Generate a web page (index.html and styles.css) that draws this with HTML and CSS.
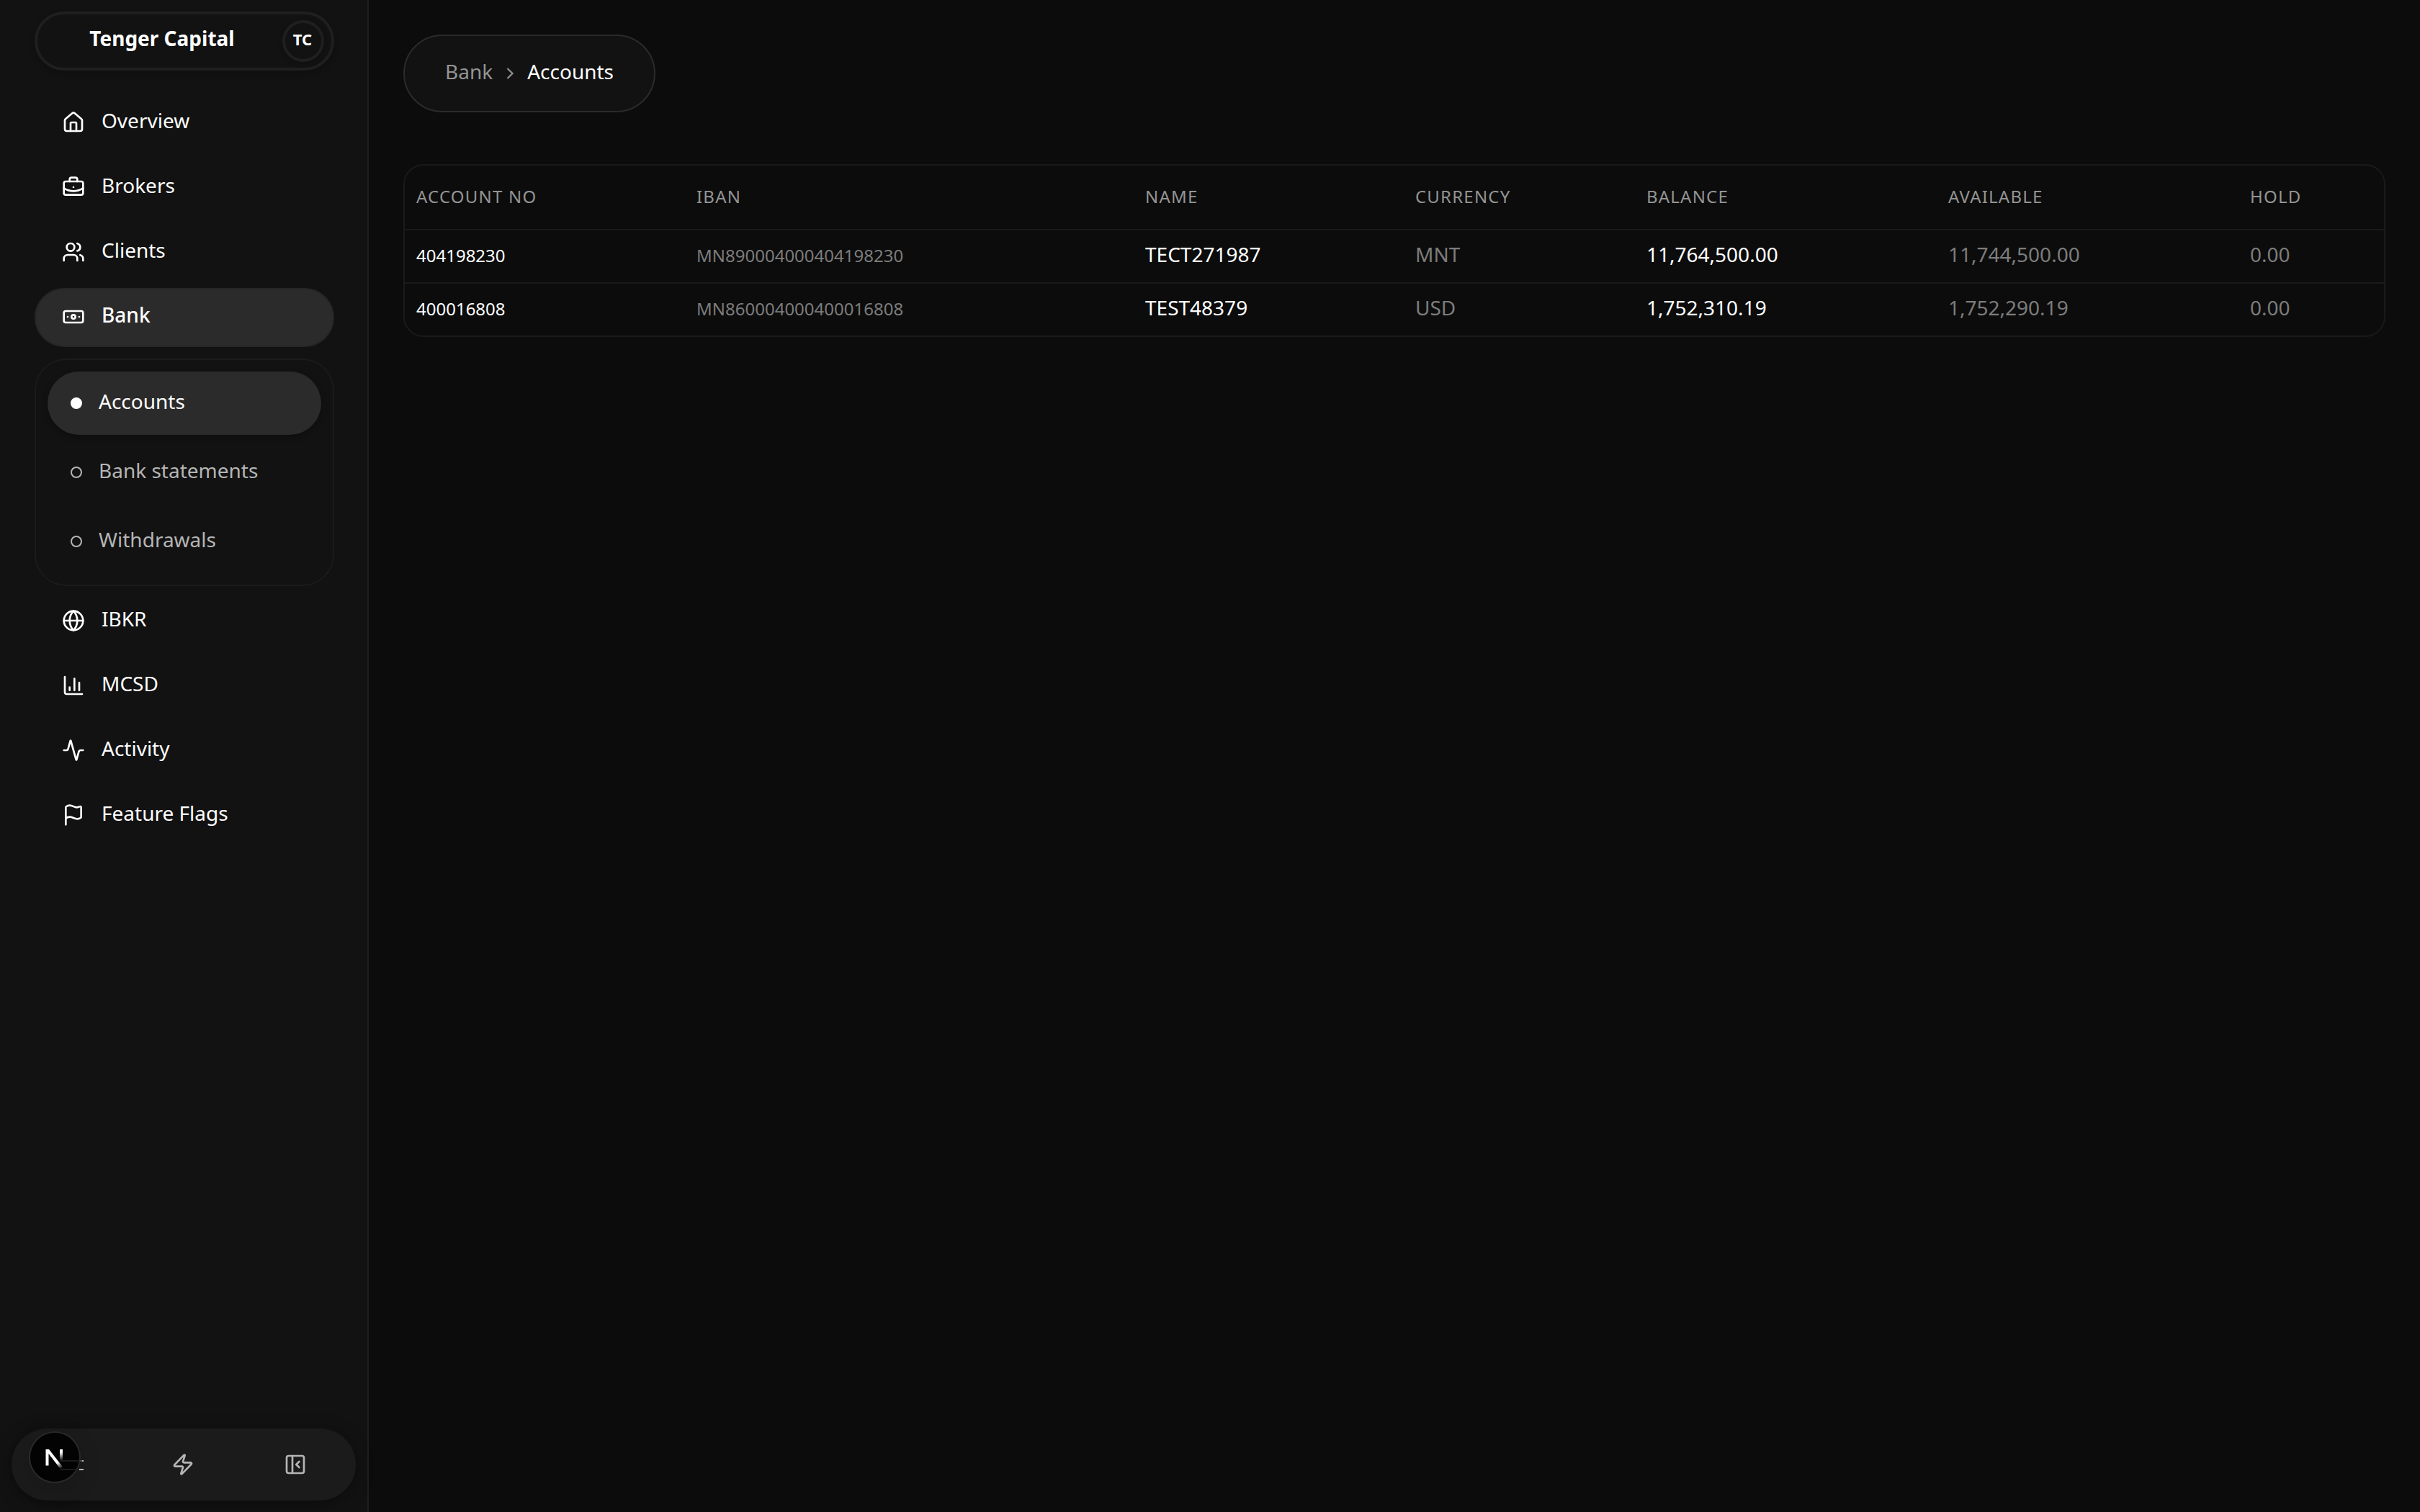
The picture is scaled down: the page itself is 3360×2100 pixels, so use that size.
FILE: index.html
```html
<!DOCTYPE html>
<html lang="en">
<head>
    <meta charset="UTF-8">
    <meta name="viewport" content="width=device-width, initial-scale=1.0">
    <title>Accounts - Tenger Capital</title>
    <link rel="stylesheet" href="styles.css">
</head>
<body>
    <!-- Sidebar -->
    <aside class="sidebar">
        <div class="brand">
            <span class="brand-name">Tenger Capital</span>
            <span class="avatar"><span>TC</span></span>
        </div>

        <nav class="nav">
            <a class="nav-item">
                <svg class="icon" viewBox="0 0 24 24"><path d="M15 21v-8a1 1 0 0 0-1-1h-4a1 1 0 0 0-1 1v8"/><path d="M3 10a2 2 0 0 1 .709-1.528l7-5.999a2 2 0 0 1 2.582 0l7 5.999A2 2 0 0 1 21 10v9a2 2 0 0 1-2 2H5a2 2 0 0 1-2-2z"/></svg>
                <span class="label">Overview</span>
            </a>
            <a class="nav-item">
                <svg class="icon" viewBox="0 0 24 24"><path d="M12 12h.01"/><path d="M16 6V4a2 2 0 0 0-2-2h-4a2 2 0 0 0-2 2v2"/><path d="M22 13a18.15 18.15 0 0 1-20 0"/><rect width="20" height="14" x="2" y="6" rx="2"/></svg>
                <span class="label">Brokers</span>
            </a>
            <a class="nav-item">
                <svg class="icon" viewBox="0 0 24 24"><path d="M16 21v-2a4 4 0 0 0-4-4H6a4 4 0 0 0-4 4v2"/><path d="M16 3.128a4 4 0 0 1 0 7.744"/><path d="M22 21v-2a4 4 0 0 0-3-3.87"/><circle cx="9" cy="7" r="4"/></svg>
                <span class="label">Clients</span>
            </a>
            <a class="nav-item active">
                <svg class="icon" viewBox="0 0 24 24"><rect width="20" height="12" x="2" y="6" rx="2"/><circle cx="12" cy="12" r="2"/><path d="M6 12h.01M18 12h.01"/></svg>
                <span class="label">Bank</span>
            </a>

            <div class="submenu">
                <a class="sub-item active"><span class="dot"></span><span class="label">Accounts</span></a>
                <a class="sub-item"><span class="dot"></span><span class="label">Bank statements</span></a>
                <a class="sub-item"><span class="dot"></span><span class="label">Withdrawals</span></a>
            </div>

            <a class="nav-item">
                <svg class="icon" viewBox="0 0 24 24"><circle cx="12" cy="12" r="10"/><path d="M12 2a14.5 14.5 0 0 0 0 20 14.5 14.5 0 0 0 0-20"/><path d="M2 12h20"/></svg>
                <span class="label">IBKR</span>
            </a>
            <a class="nav-item">
                <svg class="icon" viewBox="0 0 24 24"><path d="M3 3v16a2 2 0 0 0 2 2h16"/><path d="M18 17V9"/><path d="M13 17V5"/><path d="M8 17v-3"/></svg>
                <span class="label">MCSD</span>
            </a>
            <a class="nav-item">
                <svg class="icon" viewBox="0 0 24 24"><path d="M22 12h-2.48a2 2 0 0 0-1.93 1.46l-2.35 8.36a.25.25 0 0 1-.48 0L9.24 2.18a.25.25 0 0 0-.48 0l-2.35 8.36A2 2 0 0 1 4.49 12H2"/></svg>
                <span class="label">Activity</span>
            </a>
            <a class="nav-item">
                <svg class="icon" viewBox="0 0 24 24"><path d="M4 22V4a1 1 0 0 1 .4-.8A6 6 0 0 1 8 2c3 0 5 2 7.333 2q2 0 3.067-.8A1 1 0 0 1 20 4v10a1 1 0 0 1-.4.8A6 6 0 0 1 16 16c-3 0-5-2-8-2a6 6 0 0 0-4 1.528"/></svg>
                <span class="label">Feature Flags</span>
            </a>
        </nav>

        <!-- Bottom toolbar -->
        <div class="toolbar">
            <button class="tool"></button>
            <button class="tool">
                <svg class="icon" viewBox="0 0 24 24"><path d="M4 14a1 1 0 0 1-.78-1.63l9.9-10.2a.5.5 0 0 1 .86.46l-1.92 6.02A1 1 0 0 0 13 10h7a1 1 0 0 1 .78 1.63l-9.9 10.2a.5.5 0 0 1-.86-.46l1.92-6.02A1 1 0 0 0 11 14z"/></svg>
            </button>
            <button class="tool">
                <svg class="icon" viewBox="0 0 24 24"><rect width="18" height="18" x="3" y="3" rx="2"/><path d="M9 3v18"/><path d="m16 15-3-3 3-3"/></svg>
            </button>
        </div>
    </aside>

    <!-- Main content -->
    <main class="main-content">
        <div class="breadcrumb">
            <span class="crumb">Bank</span>
            <svg class="chevron" viewBox="0 0 24 24"><path d="m9 18 6-6-6-6"/></svg>
            <span class="crumb current">Accounts</span>
        </div>

        <div class="table-card">
            <table>
                <colgroup>
                    <col class="col-account"><col class="col-iban"><col class="col-name"><col class="col-currency">
                    <col class="col-balance"><col class="col-available"><col>
                </colgroup>
                <thead>
                    <tr>
                        <th>Account No</th>
                        <th>IBAN</th>
                        <th>Name</th>
                        <th>Currency</th>
                        <th>Balance</th>
                        <th>Available</th>
                        <th>Hold</th>
                    </tr>
                </thead>
                <tbody>
                    <tr>
                        <td class="small">404198230</td>
                        <td class="small muted">MN890004000404198230</td>
                        <td>TECT271987</td>
                        <td class="muted">MNT</td>
                        <td>11,764,500.00</td>
                        <td class="muted">11,744,500.00</td>
                        <td class="muted">0.00</td>
                    </tr>
                    <tr>
                        <td class="small">400016808</td>
                        <td class="small muted">MN860004000400016808</td>
                        <td>TEST48379</td>
                        <td class="muted">USD</td>
                        <td>1,752,310.19</td>
                        <td class="muted">1,752,290.19</td>
                        <td class="muted">0.00</td>
                    </tr>
                </tbody>
            </table>
        </div>
    </main>

    <!-- Dev tools badge -->
    <div class="dev-badge">
        <svg viewBox="0 0 80 72">
            <defs>
                <linearGradient id="fadeDiagonal" gradientUnits="userSpaceOnUse" x1="36" y1="38" x2="46" y2="51">
                    <stop offset="0" stop-color="#fff"/>
                    <stop offset="0.4" stop-color="#fff"/>
                    <stop offset="1" stop-color="#fff" stop-opacity="0"/>
                </linearGradient>
                <linearGradient id="fadeStem" gradientUnits="userSpaceOnUse" x1="0" y1="24" x2="0" y2="41">
                    <stop offset="0" stop-color="#fff"/>
                    <stop offset="0.3" stop-color="#fff"/>
                    <stop offset="1" stop-color="#fff" stop-opacity="0"/>
                </linearGradient>
            </defs>
            <path d="M44 41H70M44 53H68" stroke="#1b1b1b" stroke-width="2"/>
            <path d="M72 41h1M74 41h2M70 53h6" stroke="#b5b5b5" stroke-width="2"/>
            <path d="M23.5 25h4.5L48 50.5 44.5 53 27.5 31V47.5h-4z" fill="url(#fadeDiagonal)"/>
            <path d="M43 25h4v16h-4z" fill="url(#fadeStem)"/>
        </svg>
    </div>
</body>
</html>
```
FILE: styles.css
```css
* {
    margin: 0;
    padding: 0;
    box-sizing: border-box;
}

body {
    display: grid;
    grid-template-columns: 512px 1fr;
    min-height: 100vh;
    background-color: #0c0c0c;
    color: #fff;
    font-family: 'Noto Sans', sans-serif;
    font-size: 28px;
    line-height: 40px;
}

/* Sidebar */
.sidebar {
    display: flex;
    flex-direction: column;
    height: 100vh;
    padding: 16px;
    background-color: #121212;
    border-right: 2px solid #1f1f1f;
}

.brand {
    display: flex;
    align-items: center;
    height: 82px;
    margin: 0 30px 32px 32px;
    padding: 0 10px;
    border: 4px solid #1f1f1f;
    border-radius: 41px;
    box-shadow: 0 4px 8px rgba(0, 0, 0, 0.2);
}

.brand-name {
    flex: 1;
    padding: 0 4px 8px 0;
    text-align: center;
    font-weight: 700;
}

.avatar {
    display: flex;
    align-items: center;
    justify-content: center;
    width: 58px;
    height: 58px;
    border: 4px solid #1f1f1f;
    border-radius: 50%;
    box-shadow: 0 2px 6px rgba(0, 0, 0, 0.2);
    font-size: 22px;
    font-weight: 700;
}

.avatar span {
    padding: 0 2px 6px 0;
}

.nav {
    display: flex;
    flex-direction: column;
    gap: 8px;
    flex: 1;
    margin: 0 30px 0 32px;
}

.nav-item {
    display: flex;
    align-items: center;
    gap: 23px;
    height: 82px;
    padding: 0 36px;
    border: 2px solid transparent;
    border-radius: 41px;
}

.nav-item.active {
    background-color: #2b2b2b;
    border-color: #262626;
    font-weight: 500;
}

.icon {
    width: 32px;
    height: 32px;
    fill: none;
    stroke: currentColor;
    stroke-width: 2;
    stroke-linecap: round;
    stroke-linejoin: round;
}

.nav-item .icon {
    margin-bottom: 2px;
}

.label {
    padding-bottom: 8px;
    white-space: nowrap;
}

.submenu {
    display: flex;
    flex-direction: column;
    gap: 8px;
    margin-top: 8px;
    padding: 16px;
    border: 2px solid #1b1b1b;
    border-radius: 44px;
}

.sub-item {
    display: flex;
    align-items: center;
    gap: 23px;
    height: 88px;
    padding: 0 32px;
    border-radius: 44px;
    color: #b5b5b5;
}

.sub-item.active {
    background-color: #2b2b2b;
    box-shadow: 0 4px 8px rgba(0, 0, 0, 0.25);
    color: #fff;
}

.sub-item .label {
    padding-bottom: 6px;
}

.dot {
    width: 16px;
    height: 16px;
    border: 2px solid currentColor;
    border-radius: 50%;
}

.active .dot {
    background-color: currentColor;
}

.toolbar {
    display: flex;
    height: 100px;
    padding: 0 6px 0 4px;
    background-color: #1b1b1b;
    border-radius: 50px;
    box-shadow: 0 4px 24px rgba(0, 0, 0, 0.35);
}

.tool {
    display: flex;
    flex: 1;
    align-items: center;
    justify-content: center;
    background: none;
    border: none;
    color: #b5b5b5;
}

/* Main content */
.main-content {
    padding: 48px;
}

.breadcrumb {
    display: flex;
    align-items: center;
    gap: 10px;
    width: 350px;
    height: 108px;
    padding: 0 56px;
    background-color: #121212;
    border: 2px solid #2b2b2b;
    border-radius: 54px;
}

.crumb {
    padding-bottom: 6px;
    color: #949494;
}

.crumb.current {
    color: #fff;
}

.chevron {
    flex-shrink: 0;
    width: 28px;
    height: 28px;
    fill: none;
    stroke: #8c8c8c;
    stroke-width: 2;
}

/* Accounts table */
.table-card {
    margin-top: 72px;
    border: 2px solid #1a1a1a;
    border-radius: 28px;
    overflow: hidden;
}

table {
    width: 100%;
    table-layout: fixed;
    border-collapse: separate;
    border-spacing: 0;
}

.col-account {
    width: 389px;
}

.col-iban {
    width: 623px;
}

.col-name {
    width: 375px;
}

.col-currency {
    width: 321px;
}

.col-balance {
    width: 419px;
}

.col-available {
    width: 419px;
}

th, td {
    padding: 0 16px 6px;
    text-align: left;
    border-bottom: 2px solid #1a1a1a;
}

th {
    height: 90px;
    padding-bottom: 2px;
    color: #949494;
    font-size: 24px;
    font-weight: 400;
    letter-spacing: 1.2px;
    text-transform: uppercase;
}

td {
    height: 74px;
}

tbody tr:last-child td {
    height: 72px;
    border-bottom: none;
}

td.small {
    padding-bottom: 3px;
    font-size: 24px;
}

.muted {
    color: #7c7c7c;
}

/* Dev tools badge */
.dev-badge {
    position: fixed;
    left: 40px;
    top: 1988px;
    width: 72px;
    height: 72px;
    background-color: #030303;
    border: 2px solid #292929;
    border-radius: 50%;
    box-shadow: 0 8px 32px rgba(0, 0, 0, 0.15);
}

.dev-badge svg {
    display: block;
    width: 80px;
    height: 72px;
    margin: -2px;
    overflow: visible;
}
```
